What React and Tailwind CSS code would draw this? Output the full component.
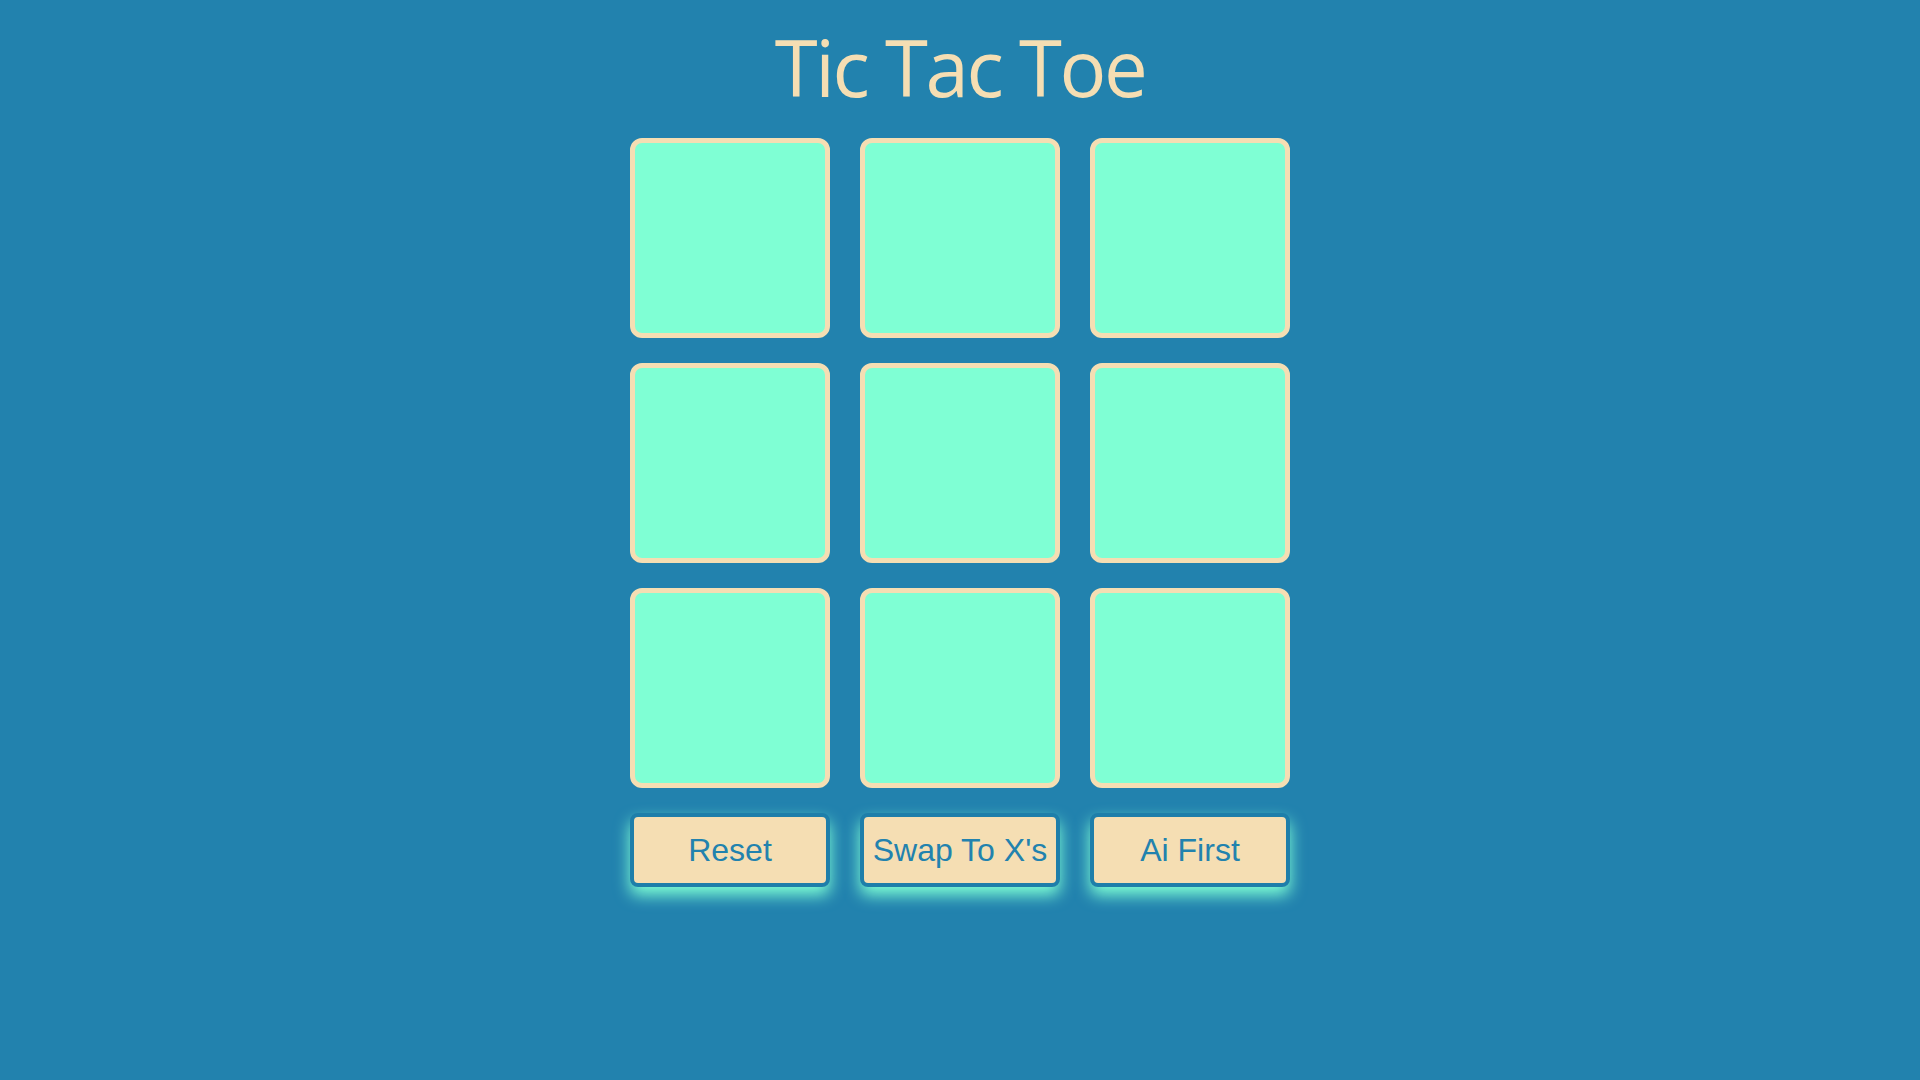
const cells = Array.from({ length: 9 }, (_, i) => i);
const buttons = ['Reset', "Swap To X's", 'Ai First'];

const Cell = () => (
    <div className="w-[200px] h-[200px] rounded-[12px] border-[5px] border-[#f5deb3] bg-[#7fffd4]" />
);

const App = () => {
    return (
        <div className="min-h-screen w-full bg-[#2282ae] flex flex-col items-center">
            <h1
                className="mt-[14px] text-[78px] leading-[106px] tracking-[-2.5px] text-[#f5deb3] font-normal"
                style={{ fontFamily: '"Open Sans", sans-serif' }}
            >
                Tic Tac Toe
            </h1>
            <div className="mt-[18px] grid grid-cols-[200px_200px_200px] gap-x-[30px] gap-y-[25px]">
                {cells.map((i) => (
                    <Cell key={i} />
                ))}
            </div>
            <div className="mt-[25px] flex gap-[30px]">
                {buttons.map((label) => (
                    <button
                        key={label}
                        className="w-[200px] h-[74px] rounded-[8px] border-[4px] border-[#1e7eaa] bg-[#f5deb3] text-[32px] text-[#2282ae] shadow-[0_8px_16px_#7fffd4]"
                        style={{ fontFamily: '"Liberation Sans", Arial, sans-serif' }}
                    >
                        {label}
                    </button>
                ))}
            </div>
        </div>
    );
};

export default App;
